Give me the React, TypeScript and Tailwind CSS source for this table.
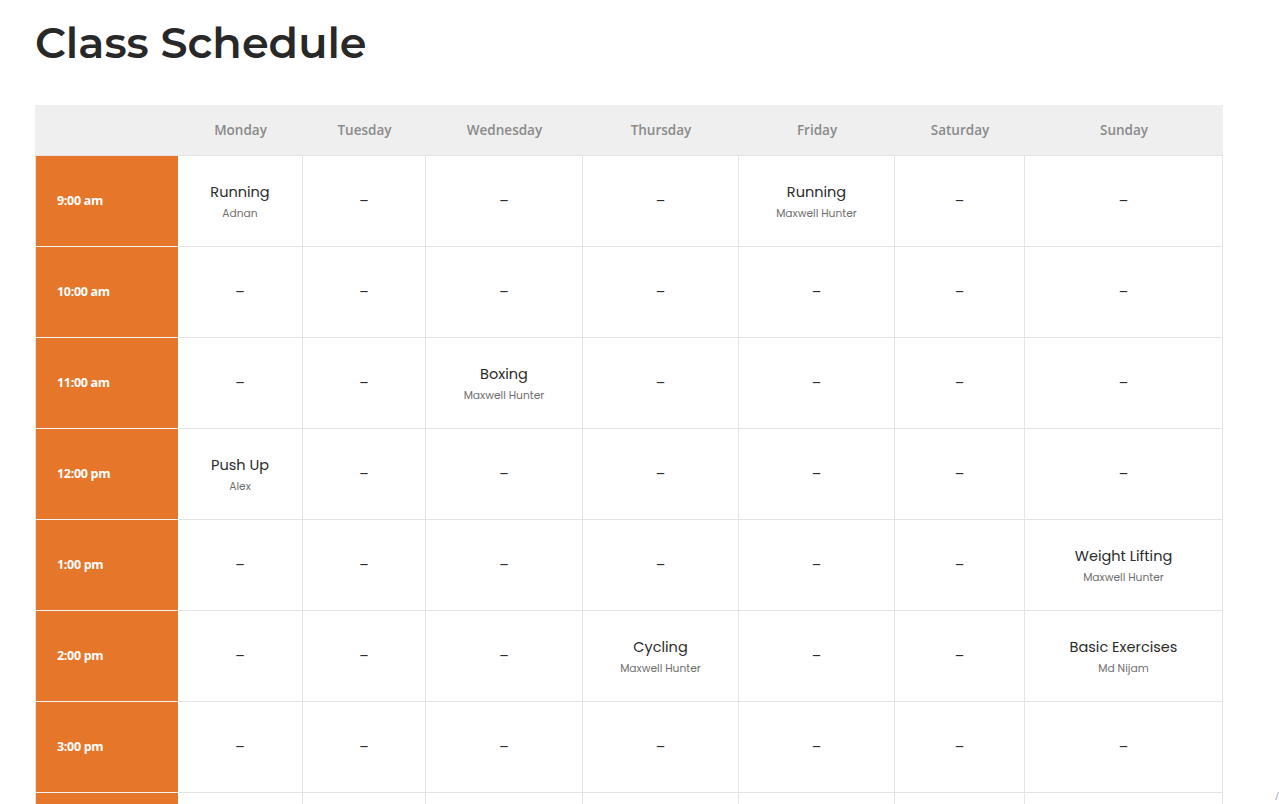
import React from "react";

const days = ["Monday", "Tuesday", "Wednesday", "Thursday", "Friday", "Saturday", "Sunday"];
const times = ["9:00 am", "10:00 am", "11:00 am", "12:00 pm", "1:00 pm", "2:00 pm", "3:00 pm", "4:00 pm"];

type Cls = { name: string; by: string } | null;
const data: Record<string, Cls[]> = {
  "9:00 am": [{ name: "Running", by: "Adnan" }, null, null, null, { name: "Running", by: "Maxwell Hunter" }, null, null],
  "10:00 am": [null, null, null, null, null, null, null],
  "11:00 am": [null, null, { name: "Boxing", by: "Maxwell Hunter" }, null, null, null, null],
  "12:00 pm": [{ name: "Push Up", by: "Alex" }, null, null, null, null, null, null],
  "1:00 pm": [null, null, null, null, null, null, { name: "Weight Lifting", by: "Maxwell Hunter" }],
  "2:00 pm": [null, null, null, { name: "Cycling", by: "Maxwell Hunter" }, null, null, { name: "Basic Exercises", by: "Md Nijam" }],
  "3:00 pm": [null, null, null, null, null, null, null],
  "4:00 pm": [null, null, null, null, null, null, null],
};

export default function App() {
  return (
    <div className="bg-white relative overflow-hidden h-[804px]">
      <div className="pl-[35px] pt-[15px]">
        <h1 className="text-[43px] leading-[56px] text-[#282828] font-semibold" style={{ fontFamily: "Montserrat, Inter, 'Noto Sans', sans-serif" }}>
          Class Schedule
        </h1>
        <div className="mt-[34px] w-[1188px] grid grid-cols-[143px_125px_123px_157px_156px_156px_130px_198px]">
          <div className="h-[51px] bg-[#efefef] border-b border-[#e4e4e4]" />
          {days.map((d) => (
            <div
              key={d}
              className="h-[51px] bg-[#efefef] border-b border-[#e4e4e4] flex items-center justify-center text-[13.5px] font-semibold text-[#8a8a8a]"
              style={{ fontFamily: "'Open Sans', sans-serif" }}
            >
              {d}
            </div>
          ))}
          {times.map((t) => (
            <React.Fragment key={t}>
              <div className="h-[91px] border-l border-[#e4e4e4] border-b border-b-[#f3f3f3] bg-[#e67629] flex items-center pl-[21px] pt-[1px] text-[12.5px] font-bold text-white tracking-[-0.3px]" style={{ fontFamily: "'Open Sans', sans-serif" }}>
                {t}
              </div>
              {data[t].map((c, i) => (
                <div
                  key={i}
                  className="h-[91px] border-r border-b border-[#e4e4e4] flex flex-col items-center justify-center"
                  style={{ fontFamily: "Poppins, 'Noto Sans', Lato, sans-serif" }}
                >
                  {c ? (
                    <>
                      <div className="text-[14.5px] leading-[20px] text-[#2b2b2b] mt-[1px]">{c.name}</div>
                      <div className="text-[10.7px] leading-[16px] text-[#6f6f6f] mt-[4px]">{c.by}</div>
                    </>
                  ) : (
                    <div className="text-[14px] text-[#2b2b2b]">–</div>
                  )}
                </div>
              ))}
            </React.Fragment>
          ))}
        </div>
      </div>
      <div className="absolute left-[1275px] top-[788px] text-[11px] text-[#aaa]" style={{ fontFamily: "'Noto Sans', sans-serif" }}>/</div>
    </div>
  );
}
